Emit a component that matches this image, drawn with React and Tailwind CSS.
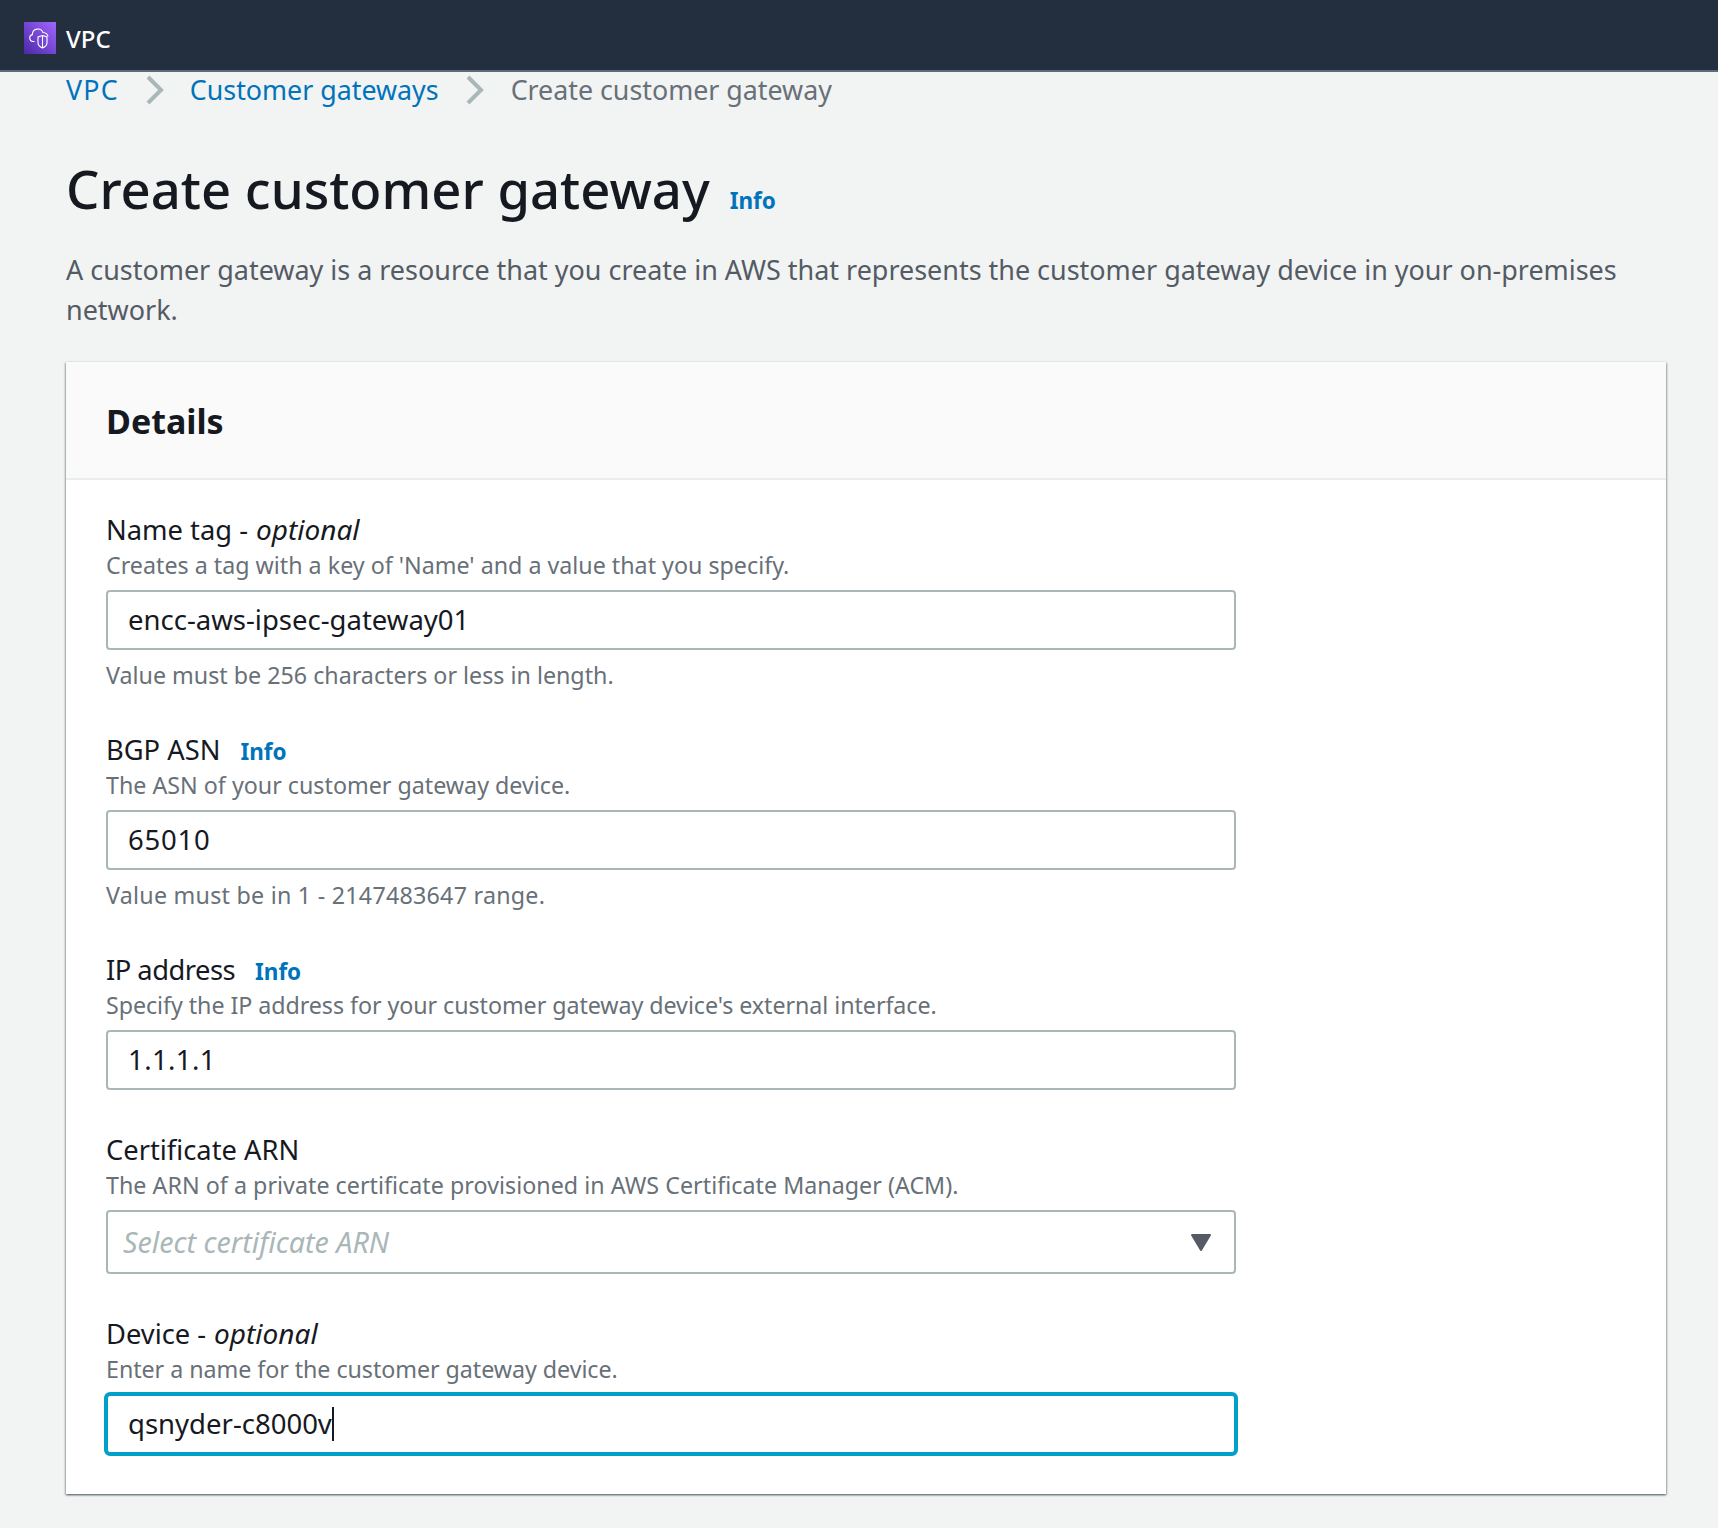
const F = "font-['Noto_Sans',sans-serif]";

function Info({ cls = "" }) {
  return <a className={`font-bold text-[#0073bb] text-[22.5px] leading-[32px] ${cls}`}>Info</a>;
}

function Field({ label, labelCls = "", italic, info, infoGap, desc, descCls = "", value, valueCls = "", hint, hintCls = "", mb, caret }) {
  return (
    <div className={mb}>
      <div className={`flex items-baseline h-[39px] text-[27.3px] text-[#16191f] ${info ? "leading-[40px]" : "leading-[38px]"}`}>
        <span className={labelCls}>{label}</span>
        {italic && <span className="italic ml-[8px] text-[28px]">{italic}</span>}
        {info && <Info cls={infoGap} />}
      </div>
      <div className={`h-[32px] text-[23.25px] leading-[32px] text-[#687078] ${descCls}`}>{desc}</div>
      <div className={caret
        ? "mt-[7px] -ml-[2px] w-[1134px] h-[64px] rounded-[6px] border-[4px] border-[#00a1c9] pl-[20px] flex items-center text-[27.5px] text-[#16191f]"
        : "mt-[9px] w-[1130px] h-[60px] rounded-[4px] border-2 border-[#aab7b8] pl-[20px] flex items-center text-[27.5px] text-[#16191f]"}>
        <span className={valueCls}>{value}</span>
        {caret && <span className="w-[2px] h-[34px] bg-[#16191f]" />}
      </div>
      {hint && <div className={`mt-[8px] h-[34px] text-[23.25px] leading-[34px] text-[#687078] ${hintCls}`}>{hint}</div>}
    </div>
  );
}

function Chevron() {
  return (
    <svg width="20" height="32" viewBox="0 0 20 32" fill="none" className="block">
      <path d="M3 3l13 13L3 29" stroke="#aab7b8" strokeWidth="4" />
    </svg>
  );
}

export default function App() {
  return (
    <div className={`${F} w-[1718px] h-[1528px] overflow-hidden bg-[#f2f3f3]`}>
      <header className="h-[72px] bg-[#232f3e] border-b-2 border-[#5f6b7a] flex items-center pl-[24px] pt-[6px]">
        <div className="w-[32px] h-[32px] bg-gradient-to-tr from-[#4d27a8] to-[#a166ff] flex items-center justify-center">
          <svg width="24" height="24" viewBox="0 0 24 24" fill="none" stroke="#fff" strokeWidth="1.1">
            <path d="M6.5 15.5H5a3.5 3.5 0 0 1-.6-6.9A5.5 5.5 0 0 1 15 6.5c2.600.2 4.500 1.500 5 4" />
            <path d="M14.500 9.500l4.500 1.500v5.500c0 2.600-2 4.500-4.500 5.500-2.500-1-4.500-2.900-4.500-5.500V11z" />
            <path d="M14.500 9.500V22" />
          </svg>
        </div>
        <span className="ml-[10px] text-white text-[24px] font-medium pt-[1px]">VPC</span>
      </header>

      <main className="pl-[66px] pr-[52px]">
        <nav className="flex items-center h-[36px] text-[26.8px] leading-[36px]">
          <a className="text-[#0073bb] tracking-[1.2px]">VPC</a>
          <span className="ml-[26px]"><Chevron /></span>
          <a className="ml-[25px] text-[#0073bb]">Customer gateways</a>
          <span className="ml-[26px]"><Chevron /></span>
          <span className="ml-[26px] text-[#687078]">Create customer gateway</span>
        </nav>

        <div className="mt-[49px] flex items-baseline h-[64px]">
          <h1 className="text-[52.6px] font-medium leading-[64px] text-[#16191f]">Create customer gateway</h1>
          <Info cls="ml-[20px]" />
        </div>

        <p className="mt-[29px] text-[26.95px] leading-[40px] text-[#545b64] w-[1620px]">
          A customer gateway is a resource that you create in AWS that represents the customer gateway device in your on-premises network.
        </p>

        <section className="mt-[32px] w-[1600px] h-[1132px] bg-white shadow-[0_1px_2px_0_rgba(0,28,36,0.5),1px_1px_2px_0_rgba(0,28,36,0.2),-1px_1px_2px_0_rgba(0,28,36,0.2)]">
          <div className="h-[118px] bg-[#fafafa] border-b-2 border-[#eaeded] pl-[40px] pt-[2px] flex items-center">
            <h2 className="text-[34px] font-bold text-[#16191f]">Details</h2>
          </div>
          <div className="pl-[40px] pt-[30px]">
            <Field label="Name tag -" italic="optional" desc="Creates a tag with a key of 'Name' and a value that you specify." value="encc-aws-ipsec-gateway01" hint="Value must be 256 characters or less in length." mb="mb-[38px]" />
            <Field label="BGP ASN" info infoGap="ml-[20px]" desc="The ASN of your customer gateway device." value="65010" valueCls="tracking-[0.8px]" hint="Value must be in 1 - 2147483647 range." hintCls="tracking-[0.25px]" mb="mb-[38px]" />
            <Field label="IP address" labelCls="tracking-[-0.5px]" info infoGap="ml-[20px]" desc="Specify the IP address for your customer gateway device's external interface." descCls="tracking-[-0.06px]" value="1.1.1.1" valueCls="tracking-[0.4px]" mb="mb-[41px]" />

            <div className="mb-[40px]">
              <div className="h-[38px] text-[27.3px] leading-[38px] text-[#16191f]">Certificate ARN</div>
              <div className="h-[32px] text-[23.25px] leading-[32px] text-[#687078] tracking-[0.03px]">The ARN of a private certificate provisioned in AWS Certificate Manager (ACM).</div>
              <div className="mt-[9px] w-[1130px] h-[64px] rounded-[4px] border-2 border-[#aab7b8] pl-[15px] pr-[22px] flex items-center justify-between">
                <span className="italic text-[28.7px] text-[#aab7b8]">Select certificate ARN</span>
                <svg width="22" height="19" viewBox="0 0 22 19"><path d="M2 2h18l-9 15z" fill="#545b64" stroke="#545b64" strokeWidth="2" strokeLinejoin="round" /></svg>
              </div>
            </div>

            <Field label="Device -" italic="optional" desc="Enter a name for the customer gateway device." descCls="tracking-[-0.05px]" value="qsnyder-c8000v" caret />
          </div>
        </section>
      </main>
    </div>
  );
}
